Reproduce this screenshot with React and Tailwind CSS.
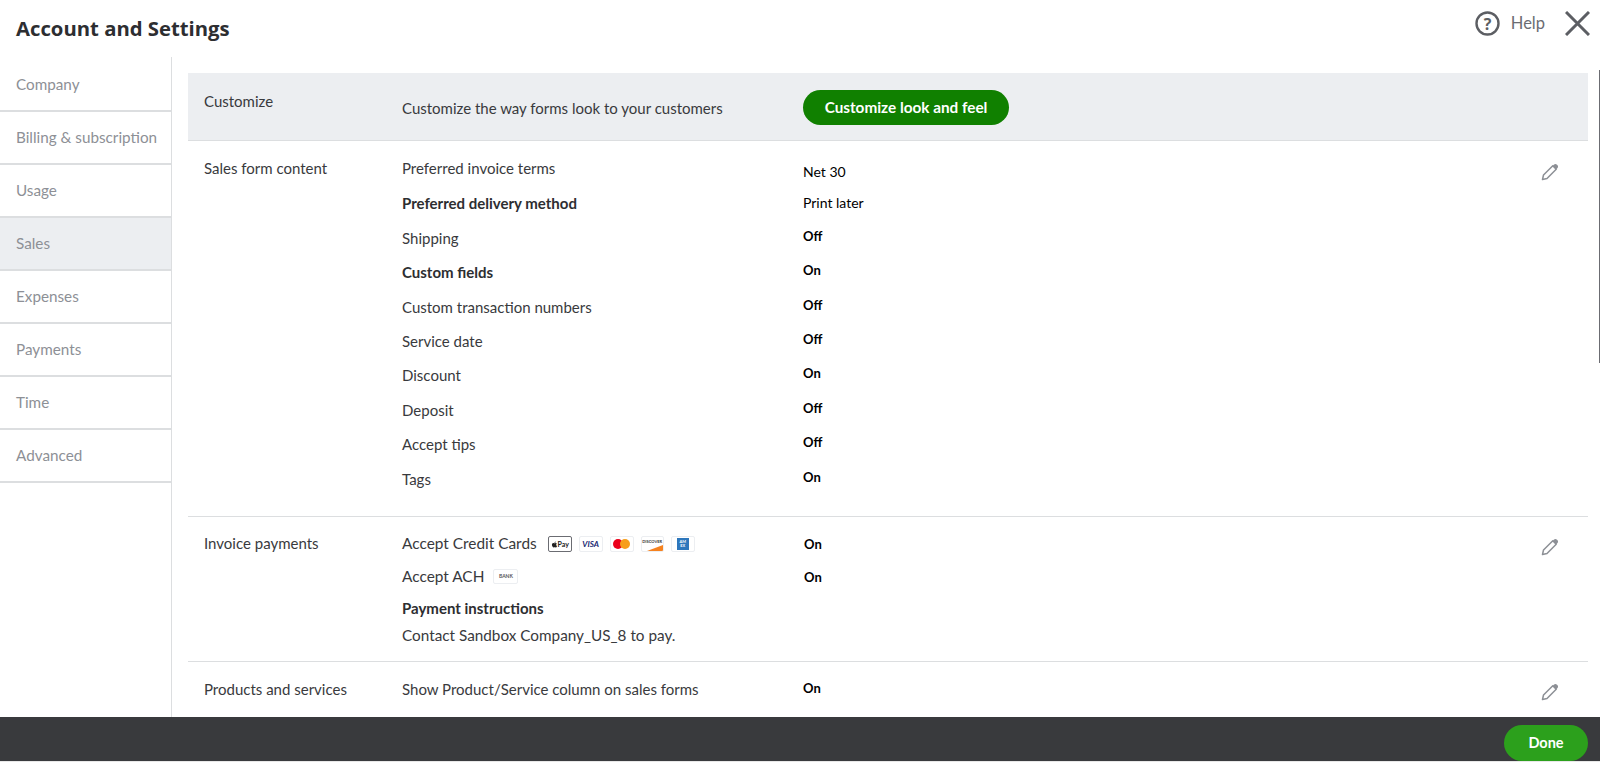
import React from "react"
import { FaApple } from "react-icons/fa"

const navItems = ["Company", "Billing & subscription", "Usage", "Sales", "Expenses", "Payments", "Time", "Advanced"]

const salesRows = [
  { label: "Preferred invoice terms", value: "Net 30", plain: true, first: true },
  { label: "Preferred delivery method", value: "Print later", strong: true, plain: true },
  { label: "Shipping", value: "Off" },
  { label: "Custom fields", value: "On", strong: true },
  { label: "Custom transaction numbers", value: "Off" },
  { label: "Service date", value: "Off" },
  { label: "Discount", value: "On" },
  { label: "Deposit", value: "Off" },
  { label: "Accept tips", value: "Off" },
  { label: "Tags", value: "On" },
]

const Pencil = () => (
  <svg width="20" height="20" viewBox="0 0 20 20" fill="none" className="text-[#8d9096]">
    <path d="M2.5 17.5l1-4.5L12.8 3.8l3.4 3.4L7 16.5z" stroke="currentColor" strokeWidth="1.5" strokeLinejoin="round" />
    <path d="M13.8 2.8c1-1 2.2-1 3.2 0l.3.3c1 1 1 2.2 0 3.2l-.9.9-3.5-3.5z" fill="currentColor" />
  </svg>
)

const CardIcons = () => (
  <div className="flex items-center gap-[7px] ml-[11px] mt-[3px]">
    <div className="w-[24px] h-[16px] border border-[#6b6c72] rounded-[2px] flex items-center justify-center text-[7px] font-bold text-[#222]">
      <FaApple className="text-[7px]" />
      Pay
    </div>
    <div className="w-[24px] h-[16px] border border-[#eceef1] rounded-[2px] flex items-center justify-center text-[8px] italic font-bold text-[#1a1f71]">
      VISA
    </div>
    <div className="w-[24px] h-[16px] border border-[#eceef1] rounded-[2px] flex items-center justify-center">
      <span className="w-[10px] h-[10px] rounded-full bg-[#eb001b]"></span>
      <span className="w-[10px] h-[10px] rounded-full bg-[#f79e1b] -ml-[3px]"></span>
    </div>
    <div className="relative w-[23px] h-[16px] border border-[#eceef1] rounded-[2px] flex items-start justify-center overflow-hidden text-[4px] leading-[9px] font-bold text-[#333]">
      DISCOVER
      <span className="absolute right-0 bottom-0 w-0 h-0 border-l-[16px] border-l-transparent border-b-[6px] border-b-[#f58220]"></span>
    </div>
    <div className="w-[24px] h-[16px] border border-[#eceef1] rounded-[2px] flex items-center justify-center">
      <div className="w-[12px] h-[12px] bg-[#2e77bc] text-white text-[4px] leading-[4px] font-bold text-center pt-[2px]">AM EX</div>
    </div>
  </div>
)

const App = () => {
  return (
    <div className="h-[762px] w-[1600px] flex flex-col overflow-hidden bg-white text-[#393a3d] font-['Lato',sans-serif]">
      {/* top bar */}
      <div className="h-[57px] shrink-0 flex items-start justify-between pl-4 pr-[10px]">
        <h1 className="mt-[14px] text-[20.3px] leading-[28px] font-bold text-[#2d2e31] font-['Open_Sans',sans-serif]">Account and Settings</h1>
        <div className="flex items-center mt-[11px]">
          <svg width="25" height="25" viewBox="0 0 25 25" fill="none" className="text-[#5c5e63]">
            <circle cx="12.5" cy="12.5" r="11" stroke="currentColor" strokeWidth="2.4" />
            <text x="12.5" y="18.5" textAnchor="middle" fontSize="16" fontWeight="700" fill="currentColor" fontFamily="Open Sans, sans-serif">?</text>
          </svg>
          <span className="ml-[11px] text-[16.5px] text-[#6b6c72]">Help</span>
          <svg width="25" height="25" viewBox="0 0 25 25" fill="none" className="ml-[20px] text-[#5c5e63]">
            <path d="M1 1l23 23M24 1L1 24" stroke="currentColor" strokeWidth="3" />
          </svg>
        </div>
      </div>

      <div className="flex-1 flex min-h-0">
        {/* sidebar */}
        <div className="w-[172px] shrink-0 border-r border-[#dcdee0] pt-[2px]">
          {navItems.map((item) => (
            <div
              key={item}
              className={
                "h-[53px] pl-4 flex items-center border-b-2 border-[#dcdee0] text-[15.25px] text-[#8d9096] " +
                (item === "Sales" ? "bg-[#eceef1]" : "")
              }
            >
              {item}
            </div>
          ))}
        </div>

        {/* content */}
        <div className="flex-1 min-w-0 pl-4 pr-3 pt-4 relative overflow-hidden">
          <div className="h-[68px] flex bg-[#eceef1] border-b border-[#dcdee0] pl-4">
            <div className="w-[198px] pt-[18px] text-[15px] leading-5">Customize</div>
            <div className="w-[401px] pt-[25px] text-[15px] leading-5">Customize the way forms look to your customers</div>
            <div className="pt-[17px]">
              <button className="h-[35px] w-[206px] rounded-full bg-[#108000] text-white text-[15.3px] font-bold">Customize look and feel</button>
            </div>
          </div>

          <div className="flex h-[376px] border-b border-[#dcdee0] pl-4">
            <div className="w-[198px] pt-[17px] text-[15px] leading-5">Sales form content</div>
            <div className="flex-1 pt-[18px]">
              {salesRows.map((row) => (
                <div key={row.label} className="h-[34.4px] flex text-[15px] leading-5">
                  <div className={"w-[401px] " + (row.strong ? "font-bold text-[#2d2e31] " : "") + (row.first ? "-mt-[1px]" : "")}>{row.label}</div>
                  <div
                    className={
                      "text-black " +
                      (row.plain ? "text-[14px] " : "text-[13px] font-bold -mt-[2px] ") +
                      (row.first ? "mt-[3px]" : "")
                    }
                  >
                    {row.value}
                  </div>
                </div>
              ))}
            </div>
            <div className="pt-[21px] pr-7"><Pencil /></div>
          </div>

          <div className="flex h-[145px] border-b border-[#dcdee0] pl-4">
            <div className="w-[198px] pt-4 text-[15px] leading-5">Invoice payments</div>
            <div className="flex-1 pt-4 text-[15px] leading-5">
              <div className="h-[32.5px] flex">
                <div className="w-[402px] flex items-start text-[15.4px]">
                  Accept Credit Cards
                  <CardIcons />
                </div>
                <div className="text-[13px] font-bold text-black mt-[1px]">On</div>
              </div>
              <div className="h-[32.5px] flex">
                <div className="w-[402px] flex items-start text-[15.4px]">
                  Accept ACH
                  <div className="ml-[9px] mt-[3px] w-[25px] h-[15px] border border-[#eceef1] rounded-[2px] flex items-center justify-center text-[5px] font-bold text-[#555]">BANK</div>
                </div>
                <div className="text-[13px] font-bold text-black mt-[1px]">On</div>
              </div>
              <div className="font-bold text-[#2d2e31] h-[27px]">Payment instructions</div>
              <div className="text-[15.3px]">Contact Sandbox Company_US_8 to pay.</div>
            </div>
            <div className="pt-[20px] pr-7"><Pencil /></div>
          </div>

          <div className="flex pl-4">
            <div className="w-[198px] pt-[17px] text-[15px] leading-5">Products and services</div>
            <div className="flex-1 pt-[17px] flex text-[15px] leading-5">
              <div className="w-[401px]">Show Product/Service column on sales forms</div>
              <div className="text-[13px] font-bold text-black -mt-[1px]">On</div>
            </div>
            <div className="pt-[20px] pr-7"><Pencil /></div>
          </div>
          <div className="absolute right-0 top-[13px] w-[1px] h-[293px] bg-[#6b6c72]"></div>
        </div>
      </div>

      {/* footer */}
      <div className="h-[45px] shrink-0 bg-[#393a3d] flex justify-end items-end pr-3 border-b border-[#e8e8e8]">
        <button className="h-[36px] w-[84px] rounded-full bg-[#2ca01c] text-white text-[14.5px] font-bold">Done</button>
      </div>
    </div>
  )
}

export default App
